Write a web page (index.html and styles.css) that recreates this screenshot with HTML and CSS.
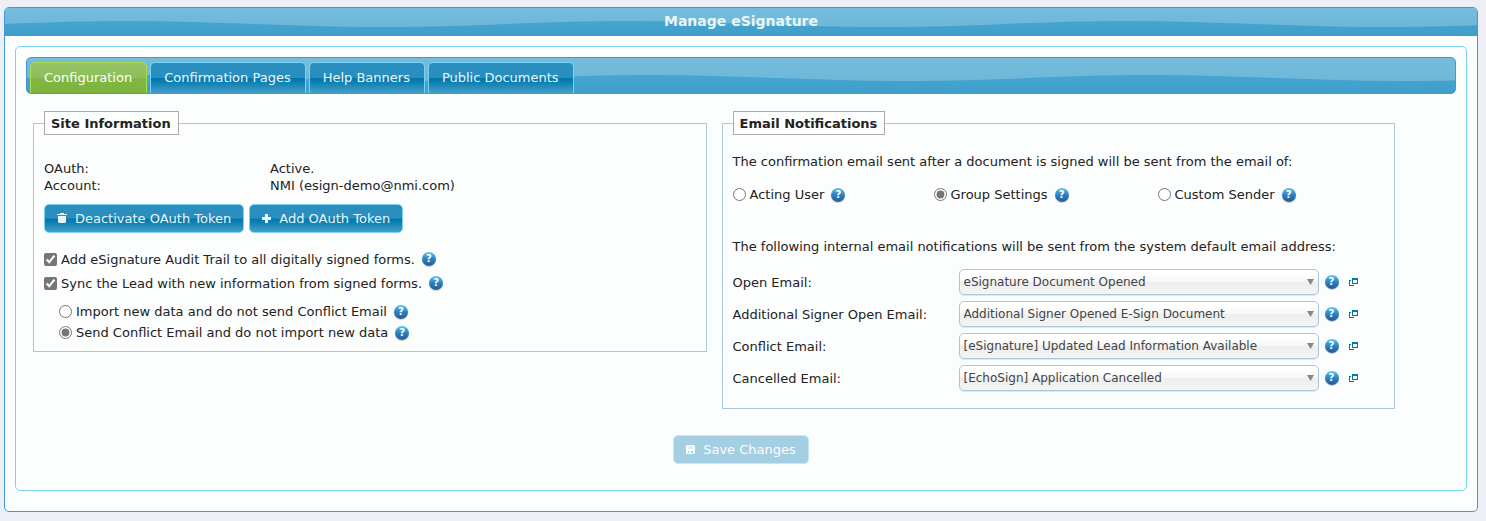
FILE: index.html
```
<!DOCTYPE html>
<html lang="en">
<head>
  <meta charset="UTF-8" />
  <meta name="viewport" content="width=device-width, initial-scale=1.0"/>
  <title>Manage eSignature</title>
  <link rel="stylesheet" href="styles.css">
</head>
<body>
  <!-- icons shared by the rows below -->
  <svg class="sprite" aria-hidden="true">
    <symbol id="icon-popup" viewBox="0 0 9 8">
      <path d="M3 0h6v6H3zM4 2v3h4V2z" fill-rule="evenodd"/>
      <path d="M0 2h2v1H1v4h4v1H0z"/>
    </symbol>
    <symbol id="icon-trash" viewBox="0 0 10 11">
      <path d="M3 0h4v1h3v1H0V1h3zM1 3h8v6L8 10H2L1 9z"/>
    </symbol>
    <symbol id="icon-plus" viewBox="0 0 9 9">
      <path d="M3 0h3v3h3v3H6v3H3V6H0V3h3z"/>
    </symbol>
    <symbol id="icon-disk" viewBox="0 0 9 9">
      <path d="M1 0h7l1 1v7L8 9H1L0 8V1zM2 1v3h5V1zM2 6v2h1V6zM5 6v2h2V6z" fill-rule="evenodd"/>
      <path d="M2 1h5v3H2z" fill-opacity="0.7"/>
    </symbol>
  </svg>

  <div class="window">
    <h1 class="window-title wave">Manage eSignature</h1>
    <div class="window-content">
      <div class="tabs">
        <nav class="tab-nav wave">
          <a class="tab active" href="#configuration">Configuration</a>
          <a class="tab" href="#confirmation-pages">Confirmation Pages</a>
          <a class="tab" href="#help-banners">Help Banners</a>
          <a class="tab" href="#public-documents">Public Documents</a>
        </nav>

        <form class="panel" id="configuration">
          <div class="columns">
            <fieldset>
              <legend>Site Information</legend>
              <dl class="info">
                <dt>OAuth:</dt>
                <dd>Active.</dd>
                <dt>Account:</dt>
                <dd>NMI (esign-demo@nmi.com)</dd>
              </dl>

              <div class="buttons">
                <button type="button" class="btn"><svg class="trash"><use href="#icon-trash"/></svg>Deactivate OAuth Token</button>
                <button type="button" class="btn"><svg><use href="#icon-plus"/></svg>Add OAuth Token</button>
              </div>

              <div class="option">
                <input type="checkbox" id="audit" checked>
                <label for="audit">Add eSignature Audit Trail to all digitally signed forms.</label>
                <button type="button" class="help">?</button>
              </div>
              <div class="option">
                <input type="checkbox" id="sync" checked>
                <label for="sync">Sync the Lead with new information from signed forms.</label>
                <button type="button" class="help">?</button>
              </div>
              <div class="sub-options">
                <div class="sub-option">
                  <input type="radio" name="conflict" id="import">
                  <label for="import">Import new data and do not send Conflict Email</label>
                  <button type="button" class="help">?</button>
                </div>
                <div class="sub-option">
                  <input type="radio" name="conflict" id="send" checked>
                  <label for="send">Send Conflict Email and do not import new data</label>
                  <button type="button" class="help">?</button>
                </div>
              </div>
            </fieldset>

            <fieldset>
              <legend>Email Notifications</legend>
              <p class="intro">The confirmation email sent after a document is signed will be sent from the email of:</p>
              <div class="senders">
                <div class="sender">
                  <input type="radio" name="sender" id="acting">
                  <label for="acting">Acting User</label>
                  <button type="button" class="help">?</button>
                </div>
                <div class="sender">
                  <input type="radio" name="sender" id="group" checked>
                  <label for="group">Group Settings</label>
                  <button type="button" class="help">?</button>
                </div>
                <div class="sender">
                  <input type="radio" name="sender" id="custom">
                  <label for="custom">Custom Sender</label>
                  <button type="button" class="help">?</button>
                </div>
              </div>

              <p class="intro">The following internal email notifications will be sent from the system default email address:</p>
              <div class="templates">
                <div class="template">
                  <label for="open">Open Email:</label>
                  <select id="open"><option>eSignature Document Opened</option></select>
                  <button type="button" class="help">?</button>
                  <a class="popup" href="#open" aria-label="Open template"><svg><use href="#icon-popup"/></svg></a>
                </div>
                <div class="template">
                  <label for="signer">Additional Signer Open Email:</label>
                  <select id="signer"><option>Additional Signer Opened E-Sign Document</option></select>
                  <button type="button" class="help">?</button>
                  <a class="popup" href="#signer" aria-label="Open template"><svg><use href="#icon-popup"/></svg></a>
                </div>
                <div class="template">
                  <label for="updated">Conflict Email:</label>
                  <select id="updated"><option>[eSignature] Updated Lead Information Available</option></select>
                  <button type="button" class="help">?</button>
                  <a class="popup" href="#updated" aria-label="Open template"><svg><use href="#icon-popup"/></svg></a>
                </div>
                <div class="template">
                  <label for="cancelled">Cancelled Email:</label>
                  <select id="cancelled"><option>[EchoSign] Application Cancelled</option></select>
                  <button type="button" class="help">?</button>
                  <a class="popup" href="#cancelled" aria-label="Open template"><svg><use href="#icon-popup"/></svg></a>
                </div>
              </div>
            </fieldset>
          </div>

          <div class="actions">
            <button type="submit" class="btn" disabled><svg><use href="#icon-disk"/></svg>Save Changes</button>
          </div>
        </form>
      </div>
    </div>
  </div>
</body>
</html>
```
FILE: styles.css
```
* {
  box-sizing: border-box;
}
body {
  margin: 7px 8px 9px 4px;
  background-color: #eceff5;
  color: #222;
  font: 13px/17px Verdana, "DejaVu Sans", sans-serif;
}
.sprite {
  display: none;
}
svg {
  fill: currentColor;
}

/* window */
.window {
  border: 1px solid #4297d7;
  border-radius: 5px;
  background: #fcfdfd;
}
.wave {
  background: url("data:image/svg+xml,%3Csvg xmlns='http://www.w3.org/2000/svg' width='500' height='100'%3E%3Cpath d='M0 52C45 50 85 49 125 49C210 49 290 55 375 55C420 55 460 54 500 52V0H0z' fill='%23fff' fill-opacity='.22'/%3E%3C/svg%3E") 0 50% repeat-x, linear-gradient(#4eaad2, #3f9fcb);
}
.window-title {
  margin: 0;
  padding: 5px;
  border-bottom: 1px solid #4297d7;
  border-radius: 4px 4px 0 0;
  color: #eaf5f7;
  font-size: 14px;
  line-height: 17px;
  text-align: center;
}
.window-content {
  padding: 10px 10px 20px;
}
.tabs {
  padding: 10px;
  border: 1px solid #79d2f3;
  border-radius: 5px;
}
.tab-nav {
  display: flex;
  gap: 3px;
  padding: 4px 3px 0;
  border: 1px solid #4297d7;
  border-radius: 5px;
}
.tab {
  padding: 6px 14px 7px 13px;
  border: 1px solid #79d2f3;
  border-bottom: 0;
  border-radius: 5px 5px 0 0;
  background: linear-gradient(#2a8fbf 0%, #2a8fbf 48%, #0078ae 52%, #0f80b3 65%, #459fc8 100%);
  color: #eaf5f7;
  text-decoration: none;
}
.tab.active {
  border-color: #acdd4a;
  background: linear-gradient(#96c367 0%, #8cbe57 50%, #7fb742 52%, #7cb43e 100%);
  color: #fff;
}

/* panel */
.panel {
  padding: 17px 61px 16px 7px;
}
.columns {
  display: grid;
  grid-template-columns: 1fr 1fr;
  align-items: start;
  gap: 15px;
}
fieldset {
  min-width: 0;
  margin: 0;
  padding: 18px 10px 8px;
  border: 1px solid #a6c9e2;
}
legend {
  padding: 3px 7px 2px 6px;
  border: 1px solid #aaa;
  font-weight: bold;
}
input {
  width: 13px;
  height: 13px;
  margin: 0;
  accent-color: #767676;
}
.info {
  display: grid;
  grid-template-columns: 226px 1fr;
  margin: 7px 0 10px;
}
.info dd {
  margin: 0;
}
.buttons {
  display: flex;
  gap: 5px;
  margin-bottom: 14px;
}
.btn {
  display: flex;
  align-items: center;
  gap: 8px;
  padding: 5px 12px;
  border: 1px solid #79d2f3;
  border-radius: 5px;
  background: linear-gradient(#2a8fbf 0%, #2a8fbf 48%, #0078ae 52%, #0f80b3 65%, #459fc8 100%);
  color: #eaf5f7;
  font: inherit;
  cursor: pointer;
}
.btn svg {
  width: 9px;
  height: 9px;
}
.btn .trash {
  width: 10px;
  height: 11px;
}
.btn:disabled {
  border-color: #c3e7f5;
  background: #a4cee1;
  color: #fbfdfd;
  cursor: default;
}
.help {
  flex: none;
  width: 14px;
  height: 14px;
  margin-left: 3px;
  padding: 0;
  border: 0;
  border-radius: 50%;
  background: linear-gradient(#5cc8ee, #2f7fbd 50%, #265a94);
  box-shadow: 0 1px 1px rgba(0,0,0,0.2);
  color: #fff;
  font: bold 10px/14px "DejaVu Sans", sans-serif;
  text-align: center;
  cursor: help;
}
.option, .sub-option, .sender {
  display: flex;
  align-items: center;
  gap: 4px;
}
.option {
  height: 24px;
}
.sub-options {
  padding: 6px 0 0 15px;
}
.sub-option {
  height: 21px;
}

/* email notifications */
.intro {
  margin: 0;
}
.senders {
  display: grid;
  grid-template-columns: 201px 224px 1fr;
  margin: 16px 0 35px;
}
.sender {
  height: 17px;
}
.templates {
  display: grid;
  gap: 6px;
  margin: 14px 0 9px;
}
.template {
  display: grid;
  grid-template-columns: 226px 360px 20px 20px;
  align-items: center;
}
.template .help {
  margin-left: 6px;
}
select {
  height: 26px;
  padding: 0 20px 0 4px;
  border: 1px solid #a6c9e2;
  border-radius: 5px;
  appearance: none;
  background: url("data:image/svg+xml,%3Csvg xmlns='http://www.w3.org/2000/svg' width='7' height='6'%3E%3Cpath d='M0 0h7L3.500 6z' fill='%23888'/%3E%3C/svg%3E") right 4px top 9px no-repeat, linear-gradient(#fff 20%, #f6f6f6 50%, #eee 52%, #f4f4f4 100%);
  box-shadow: 0 1px 1px rgba(0,0,0,0.1);
  color: #444;
  font: 12px/17px Verdana, "DejaVu Sans", sans-serif;
}
.popup {
  display: flex;
  margin-left: 10px;
  color: #0078ae;
}
.popup svg {
  flex: none;
  width: 9px;
  height: 8px;
}
.actions {
  display: flex;
  justify-content: center;
  margin: 26px -54px 0 0;
}
```
